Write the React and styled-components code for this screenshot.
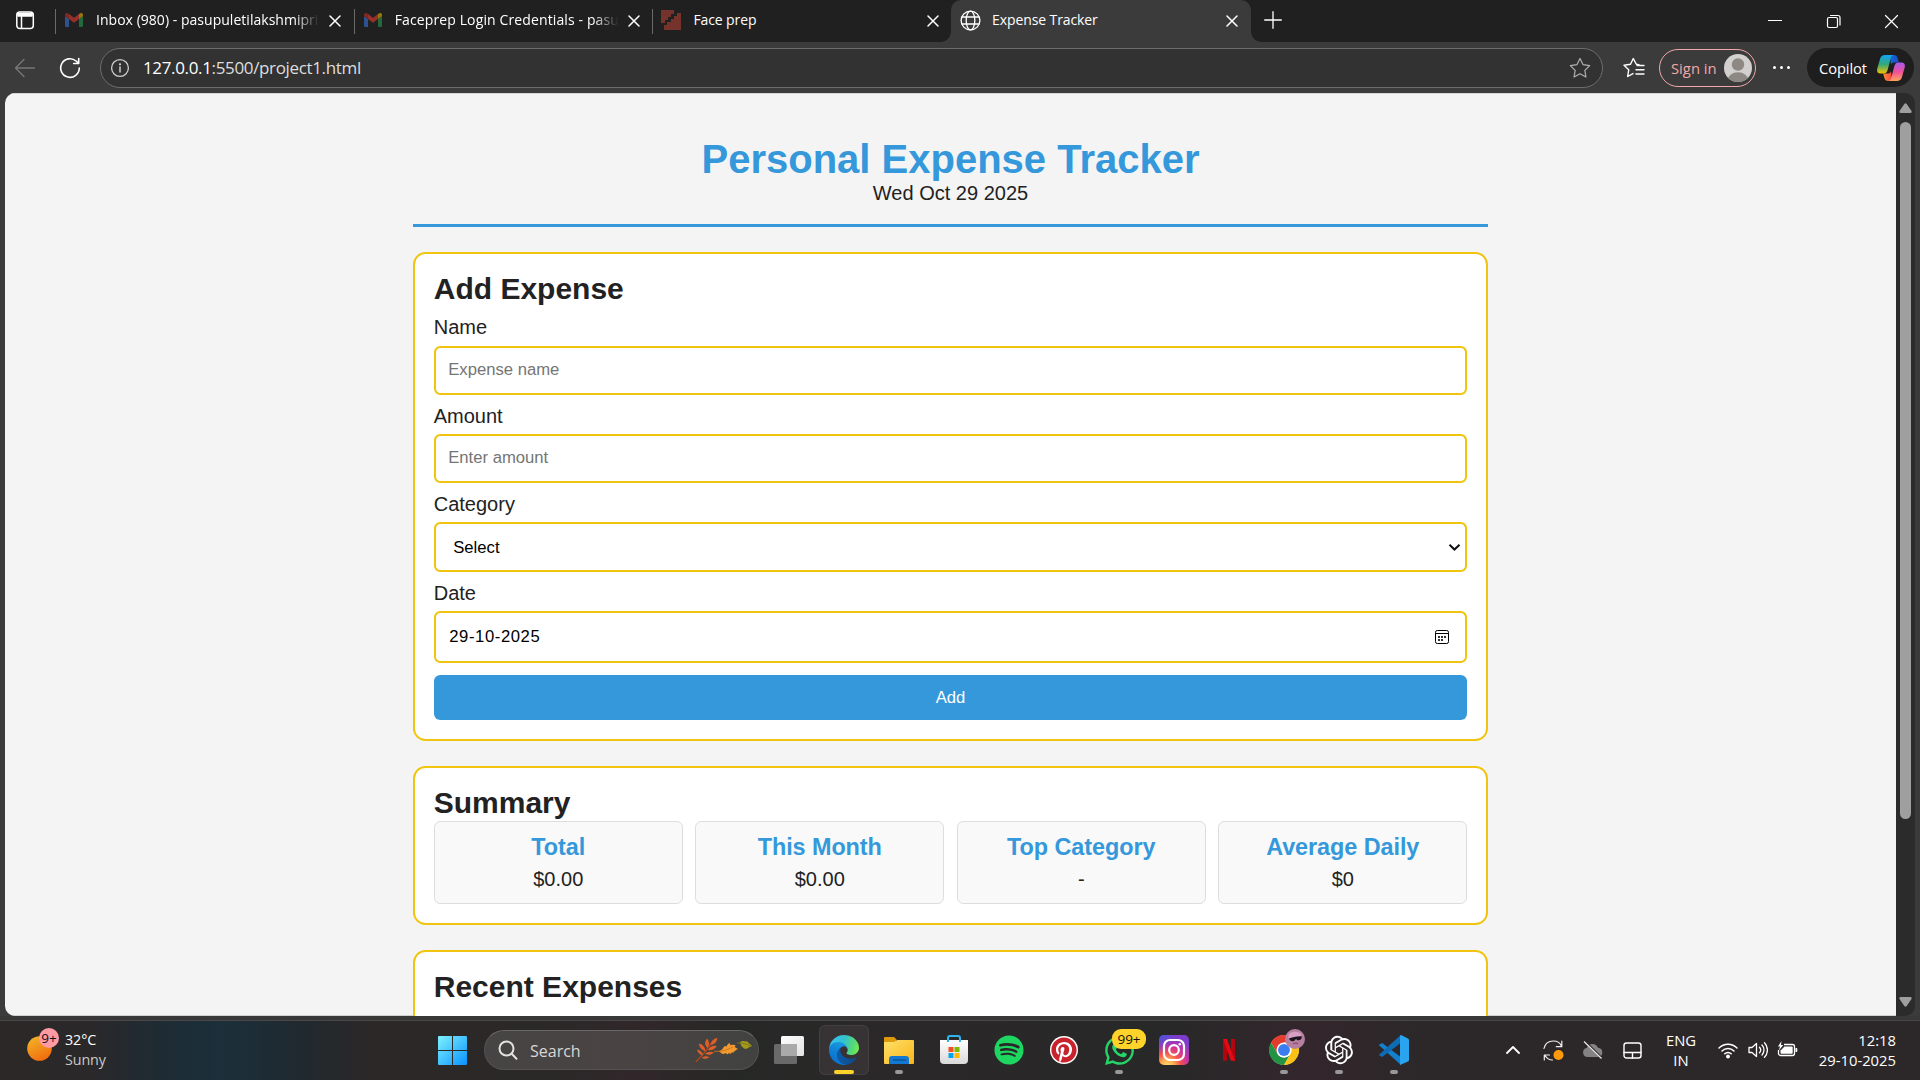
import React from "react";
import styled, { createGlobalStyle, css } from "styled-components";
import { FaSpotify, FaPinterest, FaWhatsapp } from "react-icons/fa";
import { RiOpenaiFill } from "react-icons/ri";

const GlobalStyle = createGlobalStyle`
  * { box-sizing: border-box; }
  html, body { margin: 0; padding: 0; background: #3b3b3b; overflow: hidden; }
  svg { display: block; flex: none; }
`;

const uiFont = css`
  font-family: "Open Sans", "Noto Sans", sans-serif;
`;

const Screen = styled.div`
  width: 1920px;
  height: 1080px;
  display: flex;
  flex-direction: column;
  overflow: hidden;
  background: #3b3b3b;
  ${uiFont}
`;

/* ---------- tab strip ---------- */

const TabStrip = styled.div`
  height: 42px;
  flex: none;
  display: flex;
  background: #202020;
  color: #fff;
`;

const TabActions = styled.div`
  width: 55px;
  padding: 10px 0 0 15px;
  flex: none;
`;

const Tab = styled.div`
  position: relative;
  width: ${(p) => (p.$active ? 300 : 298.7)}px;
  height: 42px;
  flex: none;
  display: flex;
  align-items: center;
  padding: 0 ${(p) => (p.$active ? 13 : 12.5)}px 2px 8px;
  background: ${(p) => (p.$active ? "#3b3b3b" : "transparent")};
  border-radius: 10px 10px 0 0;

  ${(p) =>
    p.$active
      ? css`
          &::before,
          &::after {
            content: "";
            position: absolute;
            bottom: 0;
            width: 10px;
            height: 10px;
          }
          &::before {
            left: -10px;
            background: radial-gradient(circle at 0 0, transparent 9.5px, #3b3b3b 10px);
          }
          &::after {
            right: -10px;
            background: radial-gradient(circle at 100% 0, transparent 9.5px, #3b3b3b 10px);
          }
        `
      : css`
          &::before {
            content: "";
            position: absolute;
            left: 0;
            top: 9px;
            width: 1px;
            height: 25px;
            background: #6a6a6a;
          }
        `}
`;

const TabIcon = styled.span`
  width: 22px;
  height: 22px;
  display: flex;
  align-items: center;
  justify-content: center;
`;

const TabTitle = styled.span`
  width: 228px;
  margin-left: 11px;
  white-space: nowrap;
  font-size: 14px;
  line-height: 22px;
  letter-spacing: ${(p) => p.$spacing || 0}px;
  ${(p) => p.$fade && "mask-image: linear-gradient(90deg, #000 87%, transparent 98%);"}
`;

const TabClose = styled.span`
  margin-left: auto;
  padding-top: 2px;
`;

const NewTab = styled.div`
  padding: 11px 0 0 13px;
`;

const WindowButtons = styled.div`
  margin-left: auto;
  display: flex;
  padding-top: 13px;
`;

const WindowButton = styled.div`
  width: 58px;
  display: flex;
  justify-content: center;
`;

/* ---------- toolbar ---------- */

const Toolbar = styled.div`
  height: 51px;
  flex: none;
  display: flex;
  align-items: center;
  padding: 0 6px 0 14px;
  color: #fff;
`;

const NavButton = styled.div`
  width: 22px;
  margin-right: ${(p) => p.$gap}px;
`;

const AddressBar = styled.div`
  width: 1503px;
  height: 40px;
  flex: none;
  display: flex;
  align-items: center;
  padding: 0 11px 0 9px;
  background: #323232;
  border: 1px solid #6d6d6d;
  border-radius: 20px;
`;

const Url = styled.span`
  margin-left: 13px;
  font-size: 17px;
  line-height: 24px;
  letter-spacing: -0.35px;
  color: #dedede;

  b {
    font-weight: 400;
    color: #fff;
  }
`;

const Star = styled.div`
  margin-left: auto;
`;

const Favorites = styled.div`
  margin-left: 20px;
  width: 22px;
`;

const SignIn = styled.div`
  width: 97px;
  height: 38px;
  margin-left: 14px;
  flex: none;
  display: flex;
  align-items: center;
  justify-content: space-between;
  padding: 0 3px 0 11px;
  border: 1px solid #f2a8a7;
  border-radius: 19px;
  color: #f2a8a7;
  font-size: 14.8px;
  letter-spacing: 0;
  white-space: nowrap;
`;

const MoreDots = styled.div`
  width: 51px;
  display: flex;
  justify-content: center;
  gap: 4px;

  i {
    width: 3px;
    height: 3px;
    border-radius: 50%;
    background: #fff;
  }
`;

const Copilot = styled.div`
  width: 107px;
  height: 39px;
  display: flex;
  align-items: center;
  justify-content: space-between;
  padding: 0 9.5px 0 12px;
  border-radius: 20px;
  background: #1e1e1e;
  font-size: 14.7px;
  letter-spacing: -0.1px;
`;

/* ---------- page ---------- */

const Viewport = styled.div`
  height: 923px;
  margin: 0 5px;
  flex: none;
  display: flex;
  overflow: hidden;
  border-radius: 10px;
  background: #2b2b2b;
`;

const Page = styled.main`
  width: 1891px;
  height: 923px;
  overflow: hidden;
  background: #f4f4f4;
  box-shadow: inset 0 1px 0 #d8d8d8, inset 0 -1px 0 #d0d0d0;
  color: #222;
  font-family: "Liberation Sans", Arial, sans-serif;
  font-size: 20px;
  line-height: 23px;
`;

const Container = styled.div`
  width: 1075px;
  margin: 0 auto;
  padding-top: 24.5px;
`;

const Header = styled.header`
  padding: 18.75px 0;
  margin-bottom: 25px;
  text-align: center;
  border-bottom: 3px solid #3498db;
`;

const PageTitle = styled.h1`
  margin: 0;
  font-size: 40px;
  line-height: 46px;
  color: #3498db;
`;

const Card = styled.section`
  margin-bottom: 25px;
  padding: 18.75px;
  height: ${(p) => p.$height}px;
  background: #fff;
  border: 2px solid #f1c40f;
  border-radius: 12.5px;
`;

const CardTitle = styled.h2`
  margin: 0 0 2px;
  font-size: 30px;
  line-height: 32px;
`;

const Form = styled.form`
  padding-top: 9.25px;
`;

const Label = styled.label`
  display: block;
  margin-bottom: 6px;

  &:first-child {
    margin-bottom: 7px;
  }
`;

const controlBox = css`
  width: 100%;
  margin: 0 0 10px;
  background: #fff;
  border: 2px solid #f1c40f;
  border-radius: 6.25px;
  font-family: inherit;
  font-size: 16.67px;
  line-height: 19px;
  color: #000;
`;

const TextInput = styled.input`
  ${controlBox}
  display: block;
  height: 49px;
  padding: 12px 12.5px 13px;

  &::placeholder {
    color: #757575;
  }
`;

const PickerBox = styled.div`
  ${controlBox}
  height: ${(p) => p.$height}px;
  margin-bottom: ${(p) => p.$gap}px;
  display: flex;
  align-items: center;
  justify-content: space-between;
  padding: ${(p) => p.$pad};
  letter-spacing: ${(p) => p.$spacing || 0}px;
`;

const DateValue = styled.span`
  padding-bottom: 2px;
`;

const SubmitButton = styled.button`
  display: block;
  width: 100%;
  height: 45px;
  padding: 0;
  border: none;
  border-radius: 6.25px;
  background: #3498db;
  color: #fff;
  font-family: inherit;
  font-size: 16.67px;
`;

const SummaryGrid = styled.div`
  display: grid;
  grid-template-columns: repeat(4, 1fr);
  gap: 12.5px;
`;

const SummaryBox = styled.div`
  height: 83.5px;
  padding: 12.5px;
  background: #f9f9f9;
  border: 1px solid #ddd;
  border-radius: 6.25px;
  text-align: center;

  h3 {
    margin: 0 0 6.25px;
    font-size: 23.4px;
    line-height: 27px;
    letter-spacing: -0.06px;
    color: #3498db;
  }

  p {
    margin: 0;
  }
`;

const ScrollBar = styled.div`
  width: 19px;
  display: flex;
  flex-direction: column;
  align-items: center;
  padding: 10px 0 9px;
`;

const ScrollThumb = styled.div`
  width: 11px;
  height: 697px;
  margin: 9px 0 auto;
  border-radius: 6px;
  background: #9f9f9f;
`;

const WindowEdge = styled.div`
  height: 5px;
  flex: none;
  border-bottom: 1px solid #494747;
  background: #383838;
`;

/* ---------- taskbar ---------- */

const Taskbar = styled.div`
  height: 59px;
  flex: none;
  display: flex;
  color: #fff;
  background: linear-gradient(
    90deg,
    #2c2828 0,
    #2a2829 90px,
    #1d2c35 170px,
    #1b2f3a 225px,
    #20292f 300px,
    #2c2828 370px,
    #2b2828 560px,
    #31272a 640px,
    #262826 735px,
    #2a2829 860px,
    #292829 1180px,
    #33262c 1310px,
    #2c2829 1420px,
    #2c2829 100%
  );
`;

const Weather = styled.div`
  width: 438px;
  padding: 7px 0 0 27px;
  display: flex;
  flex: none;
`;

const WeatherIcon = styled.div`
  position: relative;
  width: 38px;
  padding-top: 8px;
`;

const WeatherText = styled.div`
  padding-top: 2px;
`;

const CountBadge = styled.span`
  position: absolute;
  left: ${(p) => p.$x}px;
  top: ${(p) => p.$y}px;
  width: ${(p) => p.$w}px;
  height: 20px;
  border-radius: ${(p) => p.$radius}px;
  background: ${(p) => p.$color};
  color: #111;
  font-size: 13.5px;
  line-height: 20px;
  text-align: center;
`;

const TextPair = styled.div`
  font-size: ${(p) => p.$size || 14.8}px;
  line-height: 20px;
  text-align: ${(p) => p.$align || "left"};
  letter-spacing: ${(p) => p.$spacing || 0}px;
  white-space: nowrap;
`;

const Muted = styled.div`
  color: #c9c9c9;
`;

const StartButton = styled.div`
  width: 46px;
  padding-top: 15px;
  flex: none;
`;

const SearchPill = styled.div`
  width: 275px;
  height: 40px;
  margin-top: 9px;
  flex: none;
  display: flex;
  align-items: center;
  padding: 0 6px 0 13px;
  border-radius: 20px;
  border: 1px solid #545252;
  border-top-color: #696767;
  background: linear-gradient(90deg, #464444, #4a4343 50%, #414340);
  color: #d8d6d6;
  font-size: 16px;

  span {
    margin: 0 auto 0 12px;
    padding-top: 2px;
  }
`;

const AppRow = styled.div`
  display: flex;
  padding: 4px 0 0 5px;
`;

const AppSlot = styled.div`
  position: relative;
  width: 50px;
  height: 50px;
  margin-right: 5px;
  display: flex;
  align-items: center;
  justify-content: center;
  border-radius: 6px;
  ${(p) =>
    p.$focused &&
    css`
      background: #373335;
      box-shadow: inset 0 0 0 1px #423f40;
    `}

  &::after {
    content: "";
    position: absolute;
    bottom: 1px;
    left: 50%;
    height: 4px;
    border-radius: 2px;
    width: ${(p) => (p.$focused ? 20 : p.$running ? 8 : 0)}px;
    margin-left: ${(p) => (p.$focused ? -10 : -4)}px;
    background: ${(p) => (p.$focused ? "#ffd42a" : "#9a9798")};
  }
`;

const AvatarBadge = styled.span`
  position: absolute;
  right: 4px;
  top: 4px;
`;

const Tray = styled.div`
  margin-left: auto;
  display: flex;
  align-items: center;
  padding: 0 24px 1px 0;
`;

const TrayItem = styled.div`
  width: ${(p) => p.$w}px;
  flex: none;
  display: flex;
  justify-content: ${(p) => p.$justify || "flex-start"};
`;

/* ---------- drawings ---------- */

const Stroke = ({ size = 20, w = 1.2, color = "#fff", children, box }) => (
  <svg width={size} height={size} viewBox={`0 0 ${box || size} ${box || size}`} fill="none" stroke={color} strokeWidth={w} strokeLinecap="round" strokeLinejoin="round">
    {children}
  </svg>
);

const CloseGlyph = () => (
  <Stroke size={12} w={1.5}>
    <path d="M1 1 11 11M11 1 1 11" />
  </Stroke>
);

const GmailIcon = () => (
  <svg width="18" height="14" viewBox="0 0 18 14">
    <path d="M0 3.2 4 6v8H1.2A1.2 1.2 0 0 1 0 12.8z" fill="#2f5391" />
    <path d="M18 3.2 14 6v8h2.8a1.2 1.2 0 0 0 1.2-1.2z" fill="#24693c" />
    <path d="M4 1v5L0 3.2V1.8C0 .2 1.8-.6 3.2.4z" fill="#7d2823" />
    <path d="M14 1v5l4-2.8V1.800C18 .2 16.2-.6 14.8.4z" fill="#94760f" />
    <path d="M4 6V1l5 3.8L14 1v5L9 9.8z" fill="#943029" />
  </svg>
);

const FacePrepIcon = () => (
  <svg width="20" height="20" viewBox="0 0 20 20" fill="#75332b" shapeRendering="crispEdges">
    <path d="M0 0h13v4h-3v3H7v3H4v3H0z" />
    <path d="M20 3v17H3v-5h3v-3h4V9h3V6h3V3z" />
  </svg>
);

const Globe = () => (
  <Stroke size={21} w={1.3}>
    <circle cx="10.5" cy="10.5" r="9.4" />
    <ellipse cx="10.5" cy="10.5" rx="4.3" ry="9.4" />
    <path d="M2 7h17M2 14h17" />
  </Stroke>
);

const StarPath = "M10 1.300 12.700 6.900 18.800 7.800 14.400 12.100 15.400 18.200 10 15.300 4.600 18.200 5.600 12.100 1.200 7.800 7.300 6.900Z";

const CopilotLogo = () => (
  <svg width="28" height="26" viewBox="0 0 28 26">
    <defs>
      <linearGradient id="cpA" x1="0" y1="0" x2="0" y2="1">
        <stop offset="0" stopColor="#13a4f5" />
        <stop offset=".5" stopColor="#30a879" />
        <stop offset="1" stopColor="#f5c400" />
      </linearGradient>
      <linearGradient id="cpB" x1="0" y1="0" x2="0" y2="1">
        <stop offset="0" stopColor="#a45cf0" />
        <stop offset=".5" stopColor="#ee4f9a" />
        <stop offset="1" stopColor="#ffa45c" />
      </linearGradient>
      <linearGradient id="cpC" x1="0" y1="0" x2="1" y2="0">
        <stop offset="0" stopColor="#1168e2" />
        <stop offset="1" stopColor="#1d4dc4" />
      </linearGradient>
      <linearGradient id="cpD" x1="0" y1="0" x2="1" y2="0">
        <stop offset="0" stopColor="#ff8a3c" />
        <stop offset="1" stopColor="#f0483e" />
      </linearGradient>
    </defs>
    <path d="M13 0h4c2 0 3 1 3.600 3l1.200 4.500H17c-2 0-2.600 1-3 2.500z" fill="url(#cpC)" />
    <path d="M15 26h-4c-2 0-3-1-3.600-3L6.200 18.500H11c2 0 2.600-1 3-2.500z" fill="url(#cpD)" />
    <path d="M8 0h9c-2 0-2.800 1.500-3.300 3.500L10.600 15c-.7 2.500-2 3.500-4 3.500H3.500C.6 18.500-.4 16.500.3 13.500l2.800-9.800C3.900 1.200 5.500 0 8 0z" fill="url(#cpA)" />
    <path d="M20 26h-9c2 0 2.800-1.500 3.300-3.500L17.400 11c.7-2.500 2-3.500 4-3.500h3.100c2.900 0 3.900 2 3.200 5l-2.800 9.800C24.100 24.800 22.500 26 20 26z" fill="url(#cpB)" />
  </svg>
);

const UserAvatar = () => (
  <svg width="28" height="28" viewBox="0 0 28 28">
    <clipPath id="ava"><circle cx="14" cy="14" r="14" /></clipPath>
    <g clipPath="url(#ava)">
      <rect width="28" height="28" fill="#d2d0ce" />
      <circle cx="14" cy="10.5" r="6.2" fill="#8d8883" />
      <ellipse cx="14" cy="26.5" rx="10.5" ry="8.3" fill="#8d8883" />
    </g>
  </svg>
);

const CalendarIcon = () => (
  <svg width="14" height="14" viewBox="0 0 14 14">
    <rect x=".5" y=".5" width="13" height="13" rx="1.8" fill="none" stroke="#000" />
    <path d="M1 3.500h12" stroke="#000" />
    <g fill="#333">
      <path d="M3 6h2v2H3zM6 6h2v2H6zM9 6h2v2H9zM3 9h2v2H3zM6 9h2v2H6z" />
    </g>
  </svg>
);

const WindowsLogo = () => (
  <svg width="29" height="29" viewBox="0 0 29 29">
    <linearGradient id="win" x1="0" y1="0" x2="1" y2="1">
      <stop offset="0" stopColor="#7ef2ff" />
      <stop offset="1" stopColor="#0a92ff" />
    </linearGradient>
    <path fill="url(#win)" d="M1 0h13v14H0V1a1 1 0 0 1 1-1zM15 0h13a1 1 0 0 1 1 1v13H15zM0 15h14v14H1a1 1 0 0 1-1-1zM15 15h14v13a1 1 0 0 1-1 1H15z" />
  </svg>
);

const Leaves = () => (
  <svg width="57" height="26" viewBox="0 0 57 26">
    <path d="M.7 25C7 18 13 13 16 6" stroke="#b8481a" strokeWidth="1.2" fill="none" />
    <g fill="#dc5f2a">
      <path d="M12.500 11C9.500 8.500 9.500 4.500 12 1.500c2.500 3 2.800 6.500.5 9.500z" />
      <path d="M15.500 8c.5-4 3-6.500 6.800-7.300C22 5 19.500 7.500 15.500 8z" />
      <path d="M10.500 14.500C6.500 13 4 10 4 6.500c4 1 6.500 4 6.500 8z" />
      <path d="M13 13c2-3.500 5-4.800 8.800-4-1.800 3.200-5 4.800-8.800 4z" />
      <path d="M8 18.500C4.500 17.500 2.500 15.500 2 12.500c3.500.8 5.700 2.800 6 6z" />
      <path d="M10 17c2.500-2.500 5.500-3 9-1.500-2.500 2.300-5.500 3-9 1.500z" />
      <path d="M6.500 21c2-2 4.800-2.300 8-1-2.200 2-5 2.400-8 1z" />
    </g>
    <path d="M24 14c2-.5 3.500-1.500 4.500-3.500.8-1.500 2-2 3-.8C32 8 33 6.500 35 6c-.3 1.500.2 2.200 1.300 2 1.500-.3 3.200-.5 4.500.5-1.300.7-1.500 1.500-.3 2 1.300.5 2 1 2.200 2-1.500 0-2.500.5-2.200 1.500-1.500 0-2 .7-2 1.800-1.500-.7-2.500-.2-2.800 1.200-1.200-1-2.300-.8-3.500.5-.7-1.200-1.800-1.500-3-.8-1.300.7-3-.2-5.200-2.700z" fill="#f39a2e" />
    <path d="M19 14.300c7 .5 12-.8 19-4.300" stroke="#c9741a" strokeWidth=".9" fill="none" />
    <path d="M45 5c2-1 3.500-1.300 5-.5 1.700-.5 3 .2 3.700 1.700 1.500.5 2.500 1.500 3.300 3-1.800.3-3 1-4.300 2-2 1-3.700.7-4.700-.7C46.300 9.500 45.500 7.500 45 5z" fill="#a39a1b" />
    <path d="M42 6c5-.3 9 1 14 3" stroke="#7b7413" strokeWidth=".9" fill="none" />
  </svg>
);

const TaskViewIcon = () => (
  <svg width="30" height="28" viewBox="0 0 30 28">
    <linearGradient id="tv" x1="0" y1="0" x2="1" y2="1">
      <stop offset="0" stopColor="#fff" />
      <stop offset="1" stopColor="#e2e2e2" />
    </linearGradient>
    <rect x="0" y="8" width="23" height="20" rx="1.5" fill="#696969" />
    <rect x="7" y="0" width="23" height="20" rx="1.5" fill="url(#tv)" />
    <path d="M7 8h16v12H8.500A1.500 1.500 0 0 1 7 18.500z" fill="#a9a9a9" />
  </svg>
);

const EdgeIcon = () => (
  <svg width="30" height="30" viewBox="0 0 256 256">
    <defs>
      <linearGradient id="edA" x1=".25" y1=".5" x2=".9" y2=".6">
        <stop offset="0" stopColor="#0c59a4" />
        <stop offset="1" stopColor="#114a8b" />
      </linearGradient>
      <linearGradient id="edB" x1=".6" y1="0" x2=".3" y2="1">
        <stop offset="0" stopColor="#1b9de2" />
        <stop offset=".5" stopColor="#0f7fd6" />
        <stop offset="1" stopColor="#0d6fcf" />
      </linearGradient>
      <linearGradient id="edC" x1="0" y1=".4" x2="1" y2=".6">
        <stop offset="0" stopColor="#35c1f1" />
        <stop offset=".45" stopColor="#34c1cf" />
        <stop offset=".8" stopColor="#56d977" />
        <stop offset="1" stopColor="#72eb50" />
      </linearGradient>
    </defs>
    <path d="M231 190.500c-3.400 1.800-6.900 3.400-10.500 4.700a101.900 101.900 0 0 1-35.900 6.400c-47.300 0-88.500-32.500-88.500-74.300a31.500 31.500 0 0 1 16.400-27.300c-42.800 1.800-53.800 46.400-53.800 72.500 0 74 68.100 81.400 82.800 81.400 7.900 0 19.800-2.300 27-4.600l1.300-.4a128.300 128.300 0 0 0 66.600-52.800 4 4 0 0 0-5.400-5.600z" fill="url(#edA)" />
    <path d="M105.700 241.400A79.200 79.200 0 0 1 83 220a80.700 80.700 0 0 1 29.500-120c3.100-1.500 8.500-4.100 15.600-4a32.400 32.400 0 0 1 25.700 13 31.900 31.900 0 0 1 6.300 18.700c0-.2 24.500-79.600-80-79.600-43.900 0-80 41.600-80 78.200a130.200 130.200 0 0 0 12.100 56 128 128 0 0 0 156.400 67 75.500 75.500 0 0 1-62.900-7.900z" fill="url(#edB)" />
    <path d="M152.300 148.900c-.9 1-3.400 2.500-3.400 5.600 0 2.600 1.700 5.200 4.800 7.300 14.300 10 41.400 8.600 41.500 8.600a59.600 59.600 0 0 0 30.300-8.300 61.400 61.400 0 0 0 30.400-52.900c.3-22.400-8-37.300-11.300-43.900C223.500 23.900 177.700 0 128 0A128 128 0 0 0 0 126.200c.5-36.500 36.800-66 80-66 3.500 0 23.500.3 42 10a72.600 72.600 0 0 1 30.900 29.300c6.100 10.600 7.200 24.100 7.200 29.500 0 5.300-2.700 13.300-7.800 19.900z" fill="url(#edC)" />
  </svg>
);

const ExplorerIcon = () => (
  <svg width="30" height="27" viewBox="0 0 30 27">
    <linearGradient id="fold" x1="0" y1="0" x2="1" y2="1">
      <stop offset="0" stopColor="#ffe069" />
      <stop offset="1" stopColor="#f9b51a" />
    </linearGradient>
    <path d="M0 1a1 1 0 0 1 1-1h9l3 3h-1v6H0z" fill="#dd9a0c" />
    <path d="M0 5h10l3-2h16a1 1 0 0 1 1 1v22a1 1 0 0 1-1 1H1a1 1 0 0 1-1-1z" fill="url(#fold)" />
    <path d="M5 27v-5a3 3 0 0 1 3-3h14a3 3 0 0 1 3 3v5z" fill="#1378cf" />
    <path d="M9 23h13" stroke="#0b4f93" strokeWidth="1.3" />
  </svg>
);

const StoreIcon = () => (
  <svg width="28" height="30" viewBox="0 0 28 30">
    <linearGradient id="bag" x1="0" y1="0" x2="0" y2="1">
      <stop offset="0" stopColor="#fff" />
      <stop offset="1" stopColor="#d9d9d9" />
    </linearGradient>
    <path d="M0 5h28v20a4 4 0 0 1-4 4H4a4 4 0 0 1-4-4z" fill="url(#bag)" />
    <path d="M8 7V3a2 2 0 0 1 2-2h8a2 2 0 0 1 2 2v4" fill="none" stroke="#2db5f0" strokeWidth="2" />
    <path d="M8.500 12h5v5h-5z" fill="#f25022" />
    <path d="M14.500 12h5v5h-5z" fill="#7fba00" />
    <path d="M8.500 18h5v5h-5z" fill="#00a4ef" />
    <path d="M14.500 18h5v5h-5z" fill="#ffb900" />
  </svg>
);

const InstagramIcon = () => (
  <svg width="30" height="30" viewBox="0 0 30 30">
    <defs>
      <radialGradient id="ig1" cx=".28" cy="1.05" r="1">
        <stop offset="0" stopColor="#ffe07a" />
        <stop offset=".22" stopColor="#fdb150" />
        <stop offset=".45" stopColor="#f5504e" />
        <stop offset=".7" stopColor="#c832a4" />
        <stop offset="1" stopColor="#7d3ccc" />
      </radialGradient>
      <radialGradient id="ig2" cx="0" cy="0" r=".6">
        <stop offset="0" stopColor="#4a55d8" />
        <stop offset="1" stopColor="#4a55d8" stopOpacity="0" />
      </radialGradient>
    </defs>
    <rect width="30" height="30" rx="5" fill="url(#ig1)" />
    <rect width="30" height="30" rx="5" fill="url(#ig2)" />
    <g fill="none" stroke="#fff" strokeWidth="2.2">
      <rect x="5" y="5" width="20" height="20" rx="6" />
      <circle cx="15" cy="15" r="4.8" />
    </g>
    <circle cx="20.8" cy="9.2" r="1.3" fill="#fff" />
  </svg>
);

const NetflixIcon = () => (
  <svg width="12" height="22" viewBox="0 0 12 22">
    <path d="M0 0h4v21.500L0 22zM8 0h4v22l-4-.5z" fill="#b1060f" />
    <path d="M0 0h4l8 22-4.200-.5z" fill="#e50914" />
  </svg>
);

const ChromeIcon = () => (
  <svg width="30" height="30" viewBox="0 0 48 48">
    <circle cx="24" cy="24" r="23.5" fill="#fff" />
    <path d="M24 12h20.800A24 24 0 0 0 3.200 12l10.400 18z" fill="#e33b2e" />
    <path d="M13.600 30 3.200 12A24 24 0 0 0 24 48l10.400-18a12 12 0 0 1-20.800 0z" fill="#229342" />
    <path d="M34.400 30 24 48a24 24 0 0 0 20.800-36H24a12 12 0 0 1 10.400 18z" fill="#fbc116" />
    <circle cx="24" cy="24" r="12" fill="#fff" />
    <circle cx="24" cy="24" r="9.5" fill="#3a7df0" />
  </svg>
);

const ProfilePhoto = () => (
  <svg width="20" height="20" viewBox="0 0 20 20">
    <circle cx="10" cy="10" r="10" fill="#b57f9f" />
    <path d="M4 5c3-3 9-3 12 0l1 4H3z" fill="#d6a0c2" />
    <path d="M4 9.500c3-1 10-3 13-2-.3 3-2.300 4.500-4.700 3.500L11 10l-1.800 1.700C7 13 5 12 4 9.500z" fill="#1d1620" />
    <path d="M8 15c2-1 4-1 5 0" stroke="#8c4d70" strokeWidth="1.2" fill="none" />
  </svg>
);

const VsCodeIcon = () => (
  <svg width="30" height="30" viewBox="0 0 30 30">
    <path d="M22 0 8.700 12.200 3.200 8 .3 9.400a.8.800 0 0 0 0 1.200L22 30z" fill="#1380cc" />
    <path d="M.3 20.600 3.200 22l5.500-4.200L22 8.200V0L.3 19.400a.8.800 0 0 0 0 1.200z" fill="#0e6cb4" />
    <path d="M21 30 29 26.500a1.800 1.800 0 0 0 1-1.600V5.100a1.800 1.800 0 0 0-1-1.600L22 0c-.8.400-1 1-1 1.800v26z" fill="#2aa4ee" />
    <path d="M21 8.500v13L12.400 15z" fill="#2c2829" />
  </svg>
);

const SyncIcon = () => (
  <svg width="21" height="21" viewBox="0 0 21 21" fill="none" stroke="#eee" strokeWidth="1.2" strokeLinecap="round" strokeLinejoin="round">
    <path d="M1 8.500C2 3.500 6 1 10.500 1c4 0 7 2.500 8 5.500M18.800 1v5.700h-5.500M1.300 20v-5h5.200M2 15.500c1.500 2.500 4 4.500 7.500 4.500" />
    <circle cx="15.5" cy="15" r="5" fill="#ff9a0c" stroke="none" />
  </svg>
);

const CloudOffIcon = () => (
  <svg width="22" height="20" viewBox="0 0 22 20">
    <path d="M5.500 17a4.500 4.500 0 0 1-.8-8.900 6 6 0 0 1 11.300-.4A4.700 4.700 0 0 1 16.500 17z" fill="#858283" />
    <path d="M2.500 1l17 17" stroke="#2c2829" strokeWidth="2.400" />
    <path d="M2 1.500l17.500 17" stroke="#ececec" strokeWidth="1.2" />
  </svg>
);

const WifiIcon = () => (
  <Stroke size={20} w={1.5}>
    <path d="M1 8a12.700 12.700 0 0 1 18 0M4 11a8.500 8.500 0 0 1 12 0M6.800 13.800a4.500 4.500 0 0 1 6.400 0" />
    <circle cx="10" cy="16.5" r="1.2" fill="#fff" />
  </Stroke>
);

const SpeakerIcon = () => (
  <Stroke size={20} w={1.3}>
    <path d="M1 7.500h3L8.500 3.500v13L4 12.500H1zM11.500 7.300a4 4 0 0 1 0 5.400M14 5a7.300 7.300 0 0 1 0 10M16.500 2.700a10.600 10.600 0 0 1 0 14.600" />
  </Stroke>
);

const BatteryIcon = () => (
  <svg width="21" height="18" viewBox="0 0 21 18">
    <path d="M7 3.500h8.500a2 2 0 0 1 2 2v7a2 2 0 0 1-2 2h-12a2 2 0 0 1-2-2V9" fill="none" stroke="#fff" strokeWidth="1.3" />
    <path d="M18.500 7h1a.8.800 0 0 1 .8.800v2.500a.8.800 0 0 1-.8.800h-1z" fill="#fff" />
    <path d="M7.500 5.500h7.200a1 1 0 0 1 1 1v5.200a1 1 0 0 1-1 1H4.500a1 1 0 0 1-1-1V9.500z" fill="#fff" />
    <path d="M4.500 0 1 5.500h2L1.800 9.500 6.300 4H4z" fill="#fff" />
  </svg>
);

/* ---------- data ---------- */

const tabs = [
  { title: "Inbox (980) - pasupuletilakshmipri", icon: <GmailIcon />, fade: true, spacing: 0.03 },
  { title: "Faceprep Login Credentials - pasu", icon: <GmailIcon />, fade: true, spacing: 0.12 },
  { title: "Face prep", icon: <FacePrepIcon />, spacing: -0.1 },
  { title: "Expense Tracker", icon: <Globe />, active: true, spacing: -0.1 },
];

const summary = [
  { name: "Total", value: "$0.00" },
  { name: "This Month", value: "$0.00" },
  { name: "Top Category", value: "-" },
  { name: "Average Daily", value: "$0" },
];

const apps = [
  { icon: <TaskViewIcon /> },
  { icon: <EdgeIcon />, focused: true },
  { icon: <ExplorerIcon />, running: true },
  { icon: <StoreIcon /> },
  { icon: <FaSpotify size={30} color="#1ed760" /> },
  { icon: <PinterestIcon /> },
  {
    icon: <FaWhatsapp size={33} color="#25d366" />,
    running: true,
    badge: <CountBadge $x={18} $y={4} $w={34} $radius={9} $color="#ffd42a">99+</CountBadge>,
  },
  { icon: <InstagramIcon /> },
  { icon: <NetflixIcon /> },
  { icon: <ChromeIcon />, running: true, badge: <AvatarBadge><ProfilePhoto /></AvatarBadge> },
  { icon: <RiOpenaiFill size={34} color="#fff" />, running: true },
  { icon: <VsCodeIcon />, running: true },
];

const PinDisc = styled.span`
  width: 28px;
  height: 28px;
  border-radius: 50%;
  display: flex;
  align-items: center;
  justify-content: center;
  background: #fff;
`;

function PinterestIcon() {
  return (
    <PinDisc>
      <FaPinterest size={26} color="#c8232c" />
    </PinDisc>
  );
}

/* ---------- sections ---------- */

const BrowserChrome = () => (
  <>
    <TabStrip>
      <TabActions>
        <Stroke size={20} w={1.5}>
          <rect x="1.8" y="2" width="16.5" height="16.5" rx="3" />
          <path d="M2.500 4.800h15M2.500 3.500h15M3 6h14M6.500 6v12" />
        </Stroke>
      </TabActions>
      {tabs.map((t) => (
        <Tab key={t.title} $active={t.active}>
          <TabIcon>{t.icon}</TabIcon>
          <TabTitle $fade={t.fade} $spacing={t.spacing}>{t.title}</TabTitle>
          <TabClose><CloseGlyph /></TabClose>
        </Tab>
      ))}
      <NewTab>
        <Stroke size={18} w={1.3}><path d="M9 .7v16.600M.7 9h16.600" /></Stroke>
      </NewTab>
      <WindowButtons>
        <WindowButton><Stroke size={14} w={1.2}><path d="M.5 7.500h13" /></Stroke></WindowButton>
        <WindowButton>
          <Stroke size={16} w={1.2}>
            <rect x="2.5" y="4.5" width="10" height="10" rx="1.5" />
            <path d="M5.500 2.500h7.500a2 2 0 0 1 2 2v7.500" />
          </Stroke>
        </WindowButton>
        <WindowButton><Stroke size={16} w={1.2}><path d="M2.500 2.500l12 12M14.500 2.500l-12 12" /></Stroke></WindowButton>
      </WindowButtons>
    </TabStrip>
    <Toolbar>
      <NavButton $gap={23}>
        <Stroke size={22} w={1.3} color="#777"><path d="M20.500 11H2M10 2.500 1.500 11l8.500 8.500" /></Stroke>
      </NavButton>
      <NavButton $gap={19}>
        <Stroke size={22} w={1.6}>
          <path d="M20.300 11a9.300 9.300 0 1 1-3.200-7L19.500 6.200M19.700 1.500v5h-5" />
        </Stroke>
      </NavButton>
      <AddressBar>
        <Stroke size={20} w={1.3} color="#cfcfcf">
          <circle cx="10" cy="10" r="8.4" />
          <path d="M10 9v5" strokeWidth="1.5" />
          <circle cx="10" cy="6.3" r=".5" />
        </Stroke>
        <Url><b>127.0.0.1</b>:5500/project1.html</Url>
        <Star><Stroke size={22} box={20} w={1.1} color="#b0b0b0"><path d={StarPath} /></Stroke></Star>
      </AddressBar>
      <Favorites>
        <svg width="22" height="22" viewBox="0 0 22 22" fill="none" stroke="#fff" strokeWidth="1.4" strokeLinejoin="round" strokeLinecap="round">
          <path d="M16 7.700 13.300 7.300 10.300 1.500 7.500 7.300 1 8.200 5.700 12.800 4.700 19.500 10 16.600M14 8.500h7M13 12.800h8M13 17h8" />
        </svg>
      </Favorites>
      <SignIn>Sign in<UserAvatar /></SignIn>
      <MoreDots><i /><i /><i /></MoreDots>
      <Copilot>Copilot<CopilotLogo /></Copilot>
    </Toolbar>
  </>
);

const ExpensePage = () => (
  <Page>
    <Container>
      <Header>
        <PageTitle>Personal Expense Tracker</PageTitle>
        <div>Wed Oct 29 2025</div>
      </Header>
      <Card $height={489}>
        <CardTitle>Add Expense</CardTitle>
        <Form>
          <Label>Name</Label>
          <TextInput placeholder="Expense name" />
          <Label>Amount</Label>
          <TextInput placeholder="Enter amount" />
          <Label>Category</Label>
          <PickerBox $height={50} $gap={10} $pad="0 4px 0 17.5px">
            Select
            <svg width="13" height="9" viewBox="0 0 13 9" fill="none" stroke="#111" strokeWidth="2">
              <path d="M1.500 1.700 6.500 6.500 11.500 1.700" />
            </svg>
          </PickerBox>
          <Label>Date</Label>
          <PickerBox $height={52} $gap={12} $pad="0 16px 0 13.5px" $spacing={0.58}>
            <DateValue>29-10-2025</DateValue>
            <CalendarIcon />
          </PickerBox>
          <SubmitButton type="button">Add</SubmitButton>
        </Form>
      </Card>
      <Card $height={159}>
        <CardTitle>Summary</CardTitle>
        <SummaryGrid>
          {summary.map((s) => (
            <SummaryBox key={s.name}>
              <h3>{s.name}</h3>
              <p>{s.value}</p>
            </SummaryBox>
          ))}
        </SummaryGrid>
      </Card>
      <Card $height={200}>
        <CardTitle>Recent Expenses</CardTitle>
      </Card>
    </Container>
  </Page>
);

const SystemBar = () => (
  <Taskbar>
    <Weather>
      <WeatherIcon>
        <svg width="25" height="25" viewBox="0 0 25 25">
          <linearGradient id="sun" x1=".2" y1="0" x2=".7" y2="1">
            <stop offset="0" stopColor="#f0b429" />
            <stop offset="1" stopColor="#f26a0c" />
          </linearGradient>
          <circle cx="12.5" cy="12.5" r="12.3" fill="url(#sun)" />
        </svg>
        <CountBadge $x={12} $y={0} $w={20} $radius={10} $color="#ff99a4">9+</CountBadge>
      </WeatherIcon>
      <WeatherText>
        <TextPair $size={14.3} $spacing={-0.1}>
          <div>32°C</div>
          <Muted>Sunny</Muted>
        </TextPair>
      </WeatherText>
    </Weather>
    <StartButton><WindowsLogo /></StartButton>
    <SearchPill>
      <Stroke size={20} w={2} color="#e2e2e2"><circle cx="8.5" cy="8.5" r="7" /><path d="M13.700 13.700 18.500 18.700" /></Stroke>
      <span>Search</span>
      <Leaves />
    </SearchPill>
    <AppRow>
      {apps.map((a, i) => (
        <AppSlot key={i} $focused={a.focused} $running={a.running}>
          {a.icon}
          {a.badge}
        </AppSlot>
      ))}
    </AppRow>
    <Tray>
      <TrayItem $w={37}>
        <Stroke size={14} w={1.8}><path d="M1 10 7 4l6 6" /></Stroke>
      </TrayItem>
      <TrayItem $w={39}><SyncIcon /></TrayItem>
      <TrayItem $w={41}><CloudOffIcon /></TrayItem>
      <TrayItem $w={43}>
        <Stroke size={19} w={1.4}>
          <rect x="1" y="2" width="17" height="15" rx="2.5" />
          <path d="M1 11.500h17M9.500 11.500V17" />
        </Stroke>
      </TrayItem>
      <TrayItem $w={30} $justify="center">
        <TextPair $align="center">ENG<br />IN</TextPair>
      </TrayItem>
      <TrayItem $w={42} $justify="flex-end"><WifiIcon /></TrayItem>
      <TrayItem $w={30} $justify="flex-end"><SpeakerIcon /></TrayItem>
      <TrayItem $w={30} $justify="flex-end"><BatteryIcon /></TrayItem>
      <TrayItem $w={98} $justify="flex-end">
        <TextPair $align="right">12:18<br />29-10-2025</TextPair>
      </TrayItem>
    </Tray>
  </Taskbar>
);

export default function App() {
  return (
    <>
      <GlobalStyle />
      <Screen>
        <BrowserChrome />
        <Viewport>
          <ExpensePage />
          <ScrollBar>
            <svg width="13" height="10" viewBox="0 0 13 10"><path d="M5.300 1a1.500 1.500 0 0 1 2.400 0L12.500 8q.5 2-1 2h-10q-1.500 0-1-2z" fill="#9f9f9f" /></svg>
            <ScrollThumb />
            <svg width="13" height="10" viewBox="0 0 13 10"><path d="M5.300 9a1.500 1.500 0 0 0 2.400 0L12.500 2q.5-2-1-2h-10Q0 0 .5 2z" fill="#9f9f9f" /></svg>
          </ScrollBar>
        </Viewport>
        <WindowEdge />
        <SystemBar />
      </Screen>
    </>
  );
}
